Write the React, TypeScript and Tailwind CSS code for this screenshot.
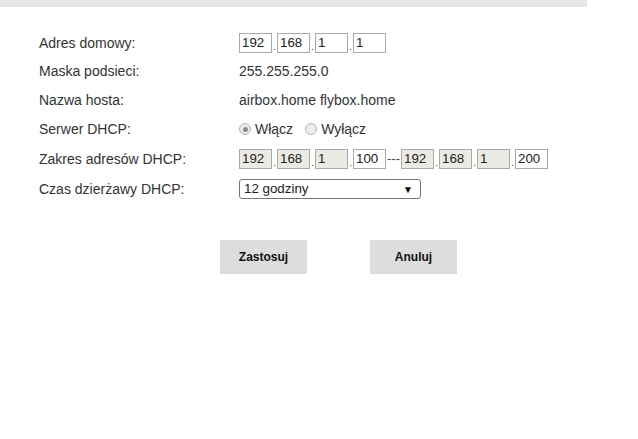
import React from "react";

const FONT = { fontFamily: '"Liberation Sans", Arial, sans-serif' };

function Box({ value, disabled }: { value: string; disabled?: boolean }) {
  return (
    <div
      className={`w-[33px] h-[20px] border border-[#a9a9a9] pl-[2px] text-[13.33px] leading-[18px] text-[#222] ${
        disabled ? "bg-[#ebebe4]" : "bg-white"
      }`}
    >
      {value}
    </div>
  );
}

function Dot() {
  return <span className="w-[5px] text-center text-[11px] leading-[26px] text-[#555]">.</span>;
}

function IpGroup({ parts, disabled }: { parts: string[]; disabled?: boolean[] }) {
  return (
    <div className="flex items-start h-[20px]">
      {parts.map((p, i) => (
        <React.Fragment key={i}>
          {i > 0 && <Dot />}
          <Box value={p} disabled={disabled?.[i]} />
        </React.Fragment>
      ))}
    </div>
  );
}

function Radio({ checked, label }: { checked?: boolean; label: string }) {
  return (
    <label className="flex items-center">
      <span className="w-[12px] h-[12px] rounded-full border border-[#b5b5b5] bg-[#ececec] flex items-center justify-center">
        {checked && <span className="w-[5px] h-[5px] rounded-full bg-[#8a8a8a]" />}
      </span>
      <span className="ml-[4px]">{label}</span>
    </label>
  );
}

function Row({ label, h, children }: { label: string; h: string; children: React.ReactNode }) {
  return (
    <div className={`flex items-center ${h}`}>
      <div className="w-[200px] shrink-0">{label}</div>
      <div className="flex items-center">{children}</div>
    </div>
  );
}

export default function App() {
  return (
    <div className="w-[638px] h-[439px] bg-white text-[14px] text-[#333]" style={FONT}>
      <div className="w-[587px] h-[7px] bg-[#e6e6e6]" />
      <div className="pl-[39px] pt-[22px]">
        <Row label="Adres domowy:" h="h-[28px]">
          <IpGroup parts={["192", "168", "1", "1"]} />
        </Row>
        <Row label="Maska podsieci:" h="h-[29px]">
          <span>255.255.255.0</span>
        </Row>
        <Row label="Nazwa hosta:" h="h-[28px]">
          <span>airbox.home flybox.home</span>
        </Row>
        <Row label="Serwer DHCP:" h="h-[30px]">
          <div className="flex items-center gap-[12px]">
            <Radio checked label="Włącz" />
            <Radio label="Wyłącz" />
          </div>
        </Row>
        <Row label="Zakres adresów DHCP:" h="h-[30px]">
          <div className="flex items-center">
            <IpGroup parts={["192", "168", "1", "100"]} disabled={[true, true, true, false]} />
            <span className="w-[15px] text-[13px] leading-[20px] text-[#444] text-center">---</span>
            <IpGroup parts={["192", "168", "1", "200"]} disabled={[true, true, true, false]} />
          </div>
        </Row>
        <Row label="Czas dzierżawy DHCP:" h="h-[30px]">
          <div className="w-[182px] h-[20px] border border-[#767676] rounded-[3px] bg-white flex items-center justify-between pl-[4px] pr-[7px] text-[13.33px] text-[#222]">
            <span>12 godziny</span>
            <span className="text-[10px] text-black">▼</span>
          </div>
        </Row>
      </div>
      <div className="flex gap-[63px] pl-[220px] pt-[36px]">
        <button className="w-[87px] h-[34px] bg-[#dddddd] text-[12px] font-bold text-[#111]">
          Zastosuj
        </button>
        <button className="w-[87px] h-[34px] bg-[#dddddd] text-[12px] font-bold text-[#111]">
          Anuluj
        </button>
      </div>
    </div>
  );
}
